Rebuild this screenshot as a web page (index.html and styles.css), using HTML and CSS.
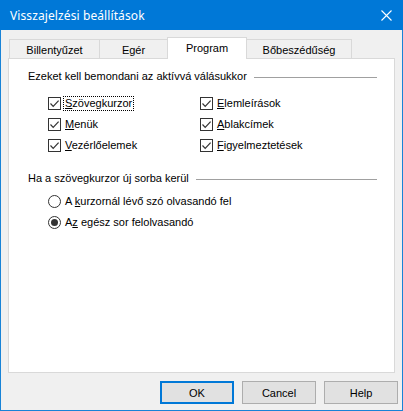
FILE: index.html
```html
<!DOCTYPE html>
<html lang="hu">
<head>
<meta charset="utf-8">
<title>Visszajelzési beállítások</title>
<link rel="stylesheet" href="styles.css">
</head>
<body>
<div class="window">
  <div class="titlebar">
    <span class="title">Visszajelzési beállítások</span>
    <span class="close">
      <svg width="11" height="11" viewBox="0 0 11 11"><path d="M0.5 0.5 L10.5 10.5 M10.5 0.5 L0.5 10.5" stroke="#fff" stroke-width="1.1" fill="none"/></svg>
    </span>
  </div>
  <div class="client">
    <div class="tabs">
      <div class="tab t1">Billentyűzet</div>
      <div class="tab t2">Egér</div>
      <div class="tab t3 selected">Program</div>
      <div class="tab t4">Bőbeszédűség</div>
    </div>
    <div class="panel">
      <div class="group-head"><span>Ezeket kell bemondani az aktívvá válásukkor</span><span class="rule"></span></div>
      <div class="checks">
        <div class="opt"><span class="box"><svg width="11" height="11" viewBox="0 0 11 11"><path d="M1.5 5.5 L4.2 8.3 L9.6 2.6" stroke="#333" stroke-width="1.2" fill="none"/></svg></span><span class="lbl focus"><u>S</u>zövegkurzor</span></div>
        <div class="opt"><span class="box"><svg width="11" height="11" viewBox="0 0 11 11"><path d="M1.5 5.5 L4.2 8.3 L9.6 2.6" stroke="#333" stroke-width="1.2" fill="none"/></svg></span><span class="lbl"><u>E</u>lemleírások</span></div>
        <div class="opt"><span class="box"><svg width="11" height="11" viewBox="0 0 11 11"><path d="M1.5 5.5 L4.2 8.3 L9.6 2.6" stroke="#333" stroke-width="1.2" fill="none"/></svg></span><span class="lbl"><u>M</u>enük</span></div>
        <div class="opt"><span class="box"><svg width="11" height="11" viewBox="0 0 11 11"><path d="M1.5 5.5 L4.2 8.3 L9.6 2.6" stroke="#333" stroke-width="1.2" fill="none"/></svg></span><span class="lbl"><u>A</u>blakcímek</span></div>
        <div class="opt"><span class="box"><svg width="11" height="11" viewBox="0 0 11 11"><path d="M1.5 5.5 L4.2 8.3 L9.6 2.6" stroke="#333" stroke-width="1.2" fill="none"/></svg></span><span class="lbl"><u>V</u>ezérlőelemek</span></div>
        <div class="opt"><span class="box"><svg width="11" height="11" viewBox="0 0 11 11"><path d="M1.5 5.5 L4.2 8.3 L9.6 2.6" stroke="#333" stroke-width="1.2" fill="none"/></svg></span><span class="lbl"><u>F</u>igyelmeztetések</span></div>
      </div>
      <div class="group-head second"><span>Ha a szövegkurzor új sorba kerül</span><span class="rule"></span></div>
      <div class="radios">
        <div class="opt"><span class="radio"></span><span class="lbl">A <u>k</u>urzornál lévő szó olvasandó fel</span></div>
        <div class="opt"><span class="radio on"><span class="dot"></span></span><span class="lbl">A<u>z</u> egész sor felolvasandó</span></div>
      </div>
    </div>
    <div class="buttons">
      <div class="btn default">OK</div>
      <div class="btn">Cancel</div>
      <div class="btn">Help</div>
    </div>
  </div>
</div>
</body>
</html>
```
FILE: styles.css
```css
html, body {
  margin: 0;
  padding: 0;
  background: #ffffff;
}
.window {
  width: 403px;
  height: 411px;
  box-sizing: border-box;
  border: 1px solid #1883d7;
  border-top: none;
  background: #f0f0f0;
  display: flex;
  flex-direction: column;
  font-family: "Liberation Sans", Arial, sans-serif;
  font-size: 11px;
  color: #000;
}
.titlebar {
  height: 30px;
  margin: 0 -1px;
  background: #0078d7;
  display: flex;
  align-items: center;
  justify-content: space-between;
  padding: 0 11px 0 10px;
  color: #fff;
  flex-shrink: 0;
}
.title {
  font-family: "Noto Sans", "Open Sans", sans-serif;
  font-size: 12px;
  letter-spacing: 0.1px;
}
.close {
  display: flex;
  width: 11px;
  height: 11px;
}
.client {
  flex: 1;
  display: flex;
  flex-direction: column;
  padding: 7px 0 0 7px;
}
.tabs {
  display: flex;
  align-items: flex-end;
  height: 21px;
  padding-left: 1px;
}
.tab {
  box-sizing: border-box;
  height: 19px;
  border: 1px solid #d9d9d9;
  border-bottom: none;
  background: #f0f0f0;
  display: flex;
  align-items: center;
  justify-content: center;
  padding-top: 1px;
  margin-left: -1px;
}
.t1 { width: 91px; margin-left: 0; }
.t2 { width: 69px; }
.t3 { width: 80px; }
.t4 { width: 106px; }
.tab.selected {
  height: 22px;
  background: #ffffff;
  margin-bottom: -1px;
  position: relative;
  z-index: 1;
  padding-top: 0;
  padding-bottom: 2px;
}
.panel {
  box-sizing: border-box;
  width: 387px;
  height: 315px;
  border: 1px solid #d9d9d9;
  background: #ffffff;
  padding: 11px 17px 0 19px;
  flex-shrink: 0;
}
.group-head {
  display: flex;
  align-items: center;
  height: 13px;
  line-height: 13px;
  white-space: nowrap;
}
.group-head .rule {
  flex: 1;
  height: 1px;
  background: #a0a0a0;
  margin-left: 7px;
  margin-top: 1px;
}
.group-head.second {
  margin-top: 16px;
}
.checks {
  margin: 10px 0 0 20px;
  display: grid;
  grid-template-columns: 152px auto;
  grid-auto-rows: 21px;
}
.radios {
  margin: 6px 0 0 20px;
  display: grid;
  grid-auto-rows: 21px;
}
.opt {
  display: flex;
  align-items: center;
  white-space: nowrap;
}
.box {
  box-sizing: border-box;
  width: 13px;
  height: 13px;
  border: 1px solid #333;
  background: #fff;
  display: flex;
  align-items: center;
  justify-content: center;
  flex-shrink: 0;
}
.box svg { display: block; }
.radio {
  box-sizing: border-box;
  width: 13px;
  height: 13px;
  border: 1px solid #333;
  border-radius: 50%;
  background: #fff;
  display: flex;
  align-items: center;
  justify-content: center;
  flex-shrink: 0;
}
.radio .dot {
  width: 7px;
  height: 7px;
  border-radius: 50%;
  background: #333;
}
.lbl {
  margin-left: 3px;
  padding: 0 1px;
  line-height: 13px;
}
.lbl.focus {
  outline: 1px dotted #000;
  outline-offset: 0;
}
u {
  text-decoration: underline;
  text-underline-offset: 1px;
}
.buttons {
  display: flex;
  justify-content: flex-end;
  gap: 8px;
  margin-top: 8px;
  padding-right: 4px;
}
.btn {
  box-sizing: border-box;
  width: 74px;
  height: 23px;
  border: 1px solid #adadad;
  background: #e1e1e1;
  display: flex;
  align-items: center;
  justify-content: center;
}
.btn.default {
  border: 2px solid #0078d7;
}
```
